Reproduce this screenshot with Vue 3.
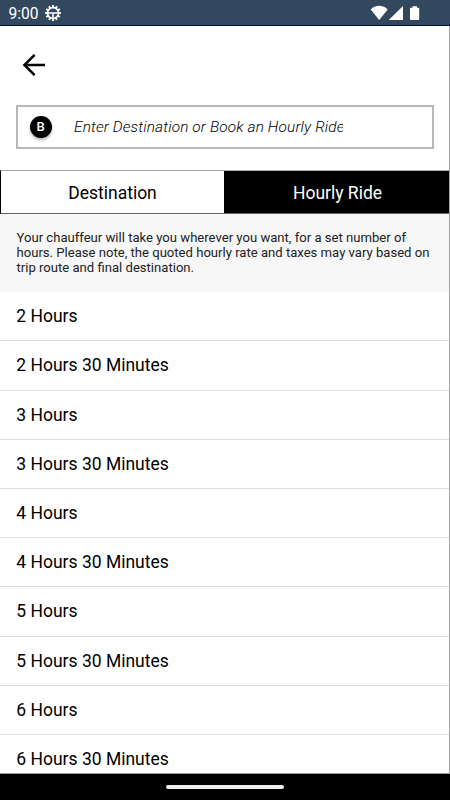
<script setup>
import { ref } from 'vue'

const tabs = ['Destination', 'Hourly Ride']
const active = ref('Hourly Ride')
const durations = []
for (let h = 2; h <= 6; h++) {
  durations.push(`${h} Hours`, `${h} Hours 30 Minutes`)
}
const teeth = Array.from({ length: 12 }, (_, i) => i * 30)
</script>

<template>
  <div class="screen">
    <header class="status">
      <span class="clock">9:00</span>
      <svg class="gear" width="16" height="16" viewBox="0 0 16 16">
        <g fill="#fff">
          <rect v-for="a in teeth" :key="a" x="7" y="0.1" width="2" height="2.4" :transform="`rotate(${a} 8 8)`" />
        </g>
        <circle cx="8" cy="8" r="5.4" fill="none" stroke="#fff" stroke-width="1.6" />
        <path d="M2.5 8h11M8 8v5.500" fill="none" stroke="#fff" stroke-width="1.6" />
      </svg>
      <svg class="signals" width="52" height="16" viewBox="0 0 52 16">
        <path d="M0.7 4.4C5.2 -0.4 13.2 -0.4 17.7 4.4L9.2 15z" fill="#fff" />
        <path d="M18.8 15H33V1z" fill="#fff" />
        <path d="M42.500 1.200h4.500v1.500h1.200q1 0 1 1v10.300q0 1-1 1h-7.200q-1 0-1-1V3.700q0-1 1-1H42.500z" fill="#fff" />
      </svg>
    </header>

    <main class="content">
      <button class="back" aria-label="Back">
        <svg width="24" height="24" viewBox="0 0 24 24">
          <path d="M23 12H2.500M12.600 1.800L2.400 12L12.600 22.200" fill="none" stroke="#000" stroke-width="2.500" />
        </svg>
      </button>
      <div class="search">
        <span class="badge">B</span>
        <span class="hint">Enter Destination or Book an Hourly Ride</span>
      </div>
      <nav class="tabs">
        <button v-for="t in tabs" :key="t" class="tab" :class="{ active: t === active }" @click="active = t">{{ t }}</button>
      </nav>
      <p class="note">
        Your chauffeur will take you wherever you want, for a set number of<br />
        hours. Please note, the quoted hourly rate and taxes may vary based on<br />
        trip route and final destination.
      </p>
      <ul class="list">
        <li v-for="d in durations" :key="d" class="row">{{ d }}</li>
      </ul>
    </main>

    <footer class="navbar"><span class="handle"></span></footer>
  </div>
</template>

<style>
body {
  margin: 0;
  overflow: hidden;
}
</style>

<style scoped>
.screen {
  width: 450px;
  height: 800px;
  display: flex;
  flex-direction: column;
  overflow: hidden;
  box-sizing: border-box;
  background: #fff;
  color: #000;
  font-family: Roboto, "Liberation Sans", sans-serif;
}
.status {
  height: 26px;
  flex: none;
  box-sizing: border-box;
  display: flex;
  align-items: center;
  padding: 0 28px 0 8.5px;
  background: #32485f;
  border-bottom: 1px solid #020a3c;
}
.clock {
  width: 31px;
  color: #fff;
  font-size: 15.6px;
  line-height: 26px;
  padding-top: 2px;
  white-space: nowrap;
}
.gear {
  margin-left: 5.5px;
}
.signals {
  margin-left: auto;
}
.content {
  flex: 1;
  min-height: 0;
  display: flex;
  flex-direction: column;
  overflow: hidden;
  border-right: 1px solid #a2a2a2;
  border-bottom: 1px solid #999;
}
.back {
  flex: none;
  width: 24px;
  height: 24px;
  margin: 27px 0 28px 22px;
  padding: 0;
  border: 0;
  background: none;
}
.back svg {
  display: block;
}
.search {
  flex: none;
  height: 44px;
  box-sizing: border-box;
  margin: 0 15px 0 16px;
  border: 2px solid #b8b8b8;
  display: flex;
  align-items: center;
  padding-left: 11.5px;
}
.badge {
  width: 22px;
  height: 22px;
  border-radius: 50%;
  background: #000;
  color: #fff;
  font-size: 13px;
  font-weight: 500;
  line-height: 22px;
  text-align: center;
  box-shadow: 0 2px 3px rgba(0, 0, 0, 0.3);
}
.hint {
  width: 269px;
  margin-left: 22.5px;
  overflow: hidden;
  white-space: nowrap;
  font-size: 15.4px;
  letter-spacing: 0.14px;
  font-style: italic;
  font-weight: 300;
  line-height: 22px;
}
.tabs {
  flex: none;
  display: flex;
  height: 44px;
  box-sizing: border-box;
  margin: 21px -1px 0 0;
  border: 1px solid #000;
  border-top-color: #aaa;
  border-bottom-color: #666;
}
.tab {
  width: 223px;
  padding: 1px 0 0;
  border: 0;
  background: #fff;
  color: #000;
  font-family: inherit;
  font-size: 17.5px;
}
.tab.active {
  flex: 1;
  padding-left: 2px;
  background: #000;
  color: #fff;
}
.note {
  flex: none;
  box-sizing: border-box;
  height: 78px;
  margin: 0;
  padding: 16px 0 0 16.5px;
  background: #f7f7f7;
  color: #222;
  font-size: 13.1px;
  line-height: 15px;
  white-space: nowrap;
}
.list {
  margin: 0;
  padding: 0.3px 0 0;
  list-style: none;
}
.row {
  box-sizing: border-box;
  height: 49.2px;
  padding-left: 16.3px;
  border-bottom: 1px solid #ddd;
  font-size: 17.5px;
  line-height: 49px;
}
.navbar {
  flex: none;
  height: 26px;
  display: flex;
  justify-content: center;
  align-items: center;
  background: #000;
}
.handle {
  width: 118px;
  height: 4px;
  border-radius: 2px;
  background: #eee;
}
</style>
